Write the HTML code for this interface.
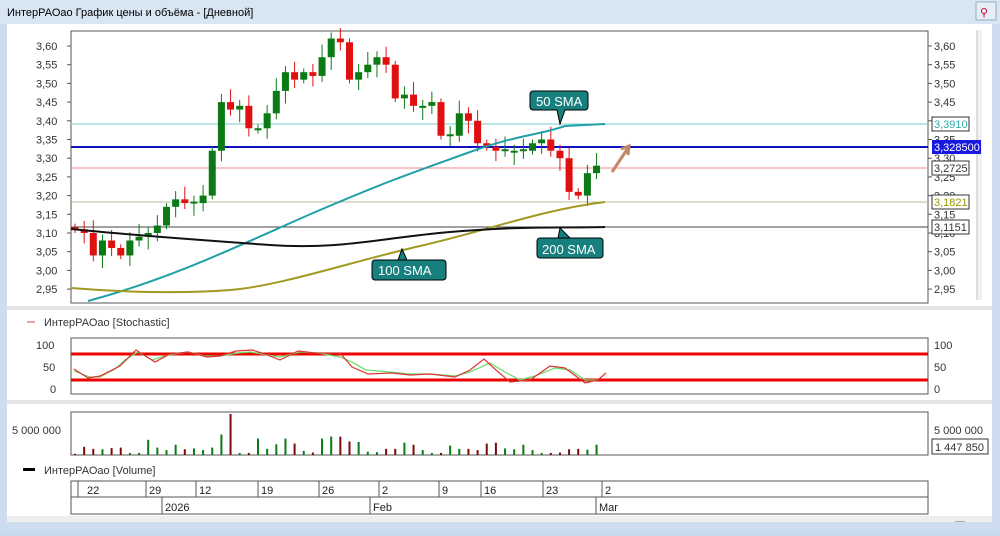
<!DOCTYPE html>
<html><head><meta charset="utf-8"><style>
body{margin:0;width:1000px;height:531px;overflow:hidden;background:#c9d9ec;font-family:"Liberation Sans",sans-serif}
svg text{font-family:"Liberation Sans",sans-serif}
</style></head><body>
<svg id="s" width="1000" height="531" xmlns="http://www.w3.org/2000/svg">
<rect x="0" y="0" width="1000" height="531" fill="#cddcee"/>
<rect x="0" y="0" width="1000" height="24" fill="#d8e5f3"/>
<text x="7" y="16" font-size="11" fill="#000">ИнтерРАОао График цены и объёма - [Дневной]</text>
<rect x="976" y="2" width="20" height="18" fill="#e8eef6" stroke="#9ab" />
<text x="980" y="16" font-size="11" fill="#c03">⚲</text>
<rect x="7" y="24" width="985" height="496" fill="#fff"/>
<rect x="7" y="306" width="985" height="4" fill="#e6e6e6"/>
<rect x="7" y="400" width="985" height="4" fill="#e6e6e6"/>
<rect x="7" y="516" width="985" height="6" fill="#eee"/>
<rect x="955" y="521" width="10" height="1" fill="#aaa"/>
<rect x="976" y="30" width="6" height="270" fill="#f0f0f0"/>
<rect x="976" y="30" width="2" height="270" fill="#ddd"/>
<!-- price plot -->
<rect x="71" y="31" width="857" height="272" fill="none" stroke="#555"/>
<g id="axes" font-size="11" fill="#333"></g>
<line x1="71" y1="124" x2="928" y2="124" stroke="#7cc" stroke-width="1"/>
<line x1="71" y1="147" x2="928" y2="147" stroke="#1010c0" stroke-width="2"/>
<line x1="71" y1="168" x2="928" y2="168" stroke="#e88" stroke-width="1"/>
<line x1="71" y1="202" x2="928" y2="202" stroke="#bb9" stroke-width="1"/>
<line x1="71" y1="227" x2="928" y2="227" stroke="#444" stroke-width="1"/>
<g id="candles"></g>
<path d="M88,301 C180,276 250,240 320,210 S420,170 470,152 S540,135 565,126 L605,124" fill="none" stroke="#20a0a8" stroke-width="2"/>
<path d="M71,288 C120,292 180,294 230,290 S350,262 420,246 S540,210 605,202" fill="none" stroke="#a09a20" stroke-width="2"/>
<path d="M71,229 C140,236 200,240 270,245 S380,238 450,232 S560,228 605,227" fill="none" stroke="#111" stroke-width="2"/>
<path d="M612,172 L628,148 M621,149 L629,146 L628,155" fill="none" stroke="#c08868" stroke-width="3"/>
<!-- callouts -->
<g font-size="13" fill="#fff">
<path d="M533,91 h52 a3,3 0 0 1 3,3 v13 a3,3 0 0 1 -3,3 h-20 l-5,14 l-3,-14 h-24 a3,3 0 0 1 -3,-3 v-13 a3,3 0 0 1 3,-3z" fill="#17807e" stroke="#000"/>
<text x="536" y="106">50 SMA</text>
<path d="M375,260 h68 a3,3 0 0 1 3,3 v14 a3,3 0 0 1 -3,3 h-68 a3,3 0 0 1 -3,-3 v-14 a3,3 0 0 1 3,-3 h23 l4,-11 l5,11z" fill="#17807e" stroke="#000"/>
<text x="378" y="275">100 SMA</text>
<path d="M540,238 h60 a3,3 0 0 1 3,3 v14 a3,3 0 0 1 -3,3 h-60 a3,3 0 0 1 -3,-3 v-14 a3,3 0 0 1 3,-3 h18 l2,-10 l10,10z" fill="#17807e" stroke="#000"/>
<text x="542" y="254">200 SMA</text>
</g>
<!-- right labels -->
<g font-size="11">
<rect x="932" y="117" width="37" height="14" fill="#fff" stroke="#333"/><text x="934" y="128" fill="#3aa">3,3910</text>
<rect x="932" y="140" width="49" height="14" fill="#1818e0"/><text x="934" y="151" fill="#fff">3,328500</text>
<rect x="932" y="161" width="37" height="14" fill="#fff" stroke="#333"/><text x="934" y="172" fill="#333">3,2725</text>
<rect x="932" y="195" width="37" height="14" fill="#fff" stroke="#333"/><text x="934" y="206" fill="#990">3,1821</text>
<rect x="932" y="220" width="37" height="14" fill="#fff" stroke="#333"/><text x="934" y="231" fill="#333">3,1151</text>
</g>
<!-- stochastic -->
<line x1="27" y1="322" x2="35" y2="322" stroke="#e44"/>
<text x="44" y="326" font-size="11" fill="#333">ИнтерРАОао [Stochastic]</text>
<rect x="71" y="338" width="857" height="56" fill="none" stroke="#555"/>
<g font-size="11" fill="#333">
<text x="36" y="349">100</text><text x="43" y="371">50</text><text x="50" y="393">0</text>
<text x="934" y="349">100</text><text x="934" y="371">50</text><text x="934" y="393">0</text>
</g>
<line x1="71" y1="354" x2="928" y2="354" stroke="#e00" stroke-width="3"/>
<line x1="71" y1="380" x2="928" y2="380" stroke="#e00" stroke-width="3"/>
<path d="M74,371 L90,377 L100,377 L115,369 L125,360 L138,352 L152,360 L168,355 L188,352 L205,356 L220,356 L238,353 L250,352 L262,354 L280,357 L300,352 L318,353 L340,357 L352,362 L366,370 L390,372 L410,374 L430,374 L455,376 L470,372 L490,363 L505,372 L520,380 L535,376 L555,368 L570,370 L585,380 L598,380" fill="none" stroke="#6d6" stroke-width="1.2"/>
<path d="M74,369 L88,378 L100,376 L120,366 L136,350 L155,362 L170,354 L188,352 L207,357 L220,356 L236,351 L252,350 L265,354 L280,360 L298,351 L315,353 L340,353 L352,367 L368,374 L392,373 L410,375 L430,374 L455,377 L470,370 L484,359 L496,370 L510,382 L530,380 L550,366 L565,368 L585,383 L598,380 L606,373" fill="none" stroke="#d33" stroke-width="1.2"/>
<!-- volume -->
<rect x="71" y="412" width="857" height="43" fill="none" stroke="#555"/>
<text x="12" y="434" font-size="11" fill="#333">5 000 000</text>
<text x="934" y="434" font-size="11" fill="#333">5 000 000</text>
<rect x="932" y="439" width="56" height="15" fill="#fff" stroke="#333"/><text x="935" y="451" font-size="11" fill="#333">1 447 850</text>
<g id="vol"></g>
<rect x="23" y="468" width="12" height="3" fill="#000"/>
<text x="44" y="474" font-size="11" fill="#333">ИнтерРАОао [Volume]</text>
<!-- dates -->
<g stroke="#555" fill="none">
<rect x="71" y="481" width="857" height="33"/>
<line x1="71" y1="497" x2="928" y2="497"/>
<line x1="78" y1="481" x2="78" y2="497"/><line x1="146" y1="481" x2="146" y2="497"/><line x1="196" y1="481" x2="196" y2="497"/><line x1="258" y1="481" x2="258" y2="497"/><line x1="319" y1="481" x2="319" y2="497"/><line x1="379" y1="481" x2="379" y2="497"/><line x1="439" y1="481" x2="439" y2="497"/><line x1="481" y1="481" x2="481" y2="497"/><line x1="543" y1="481" x2="543" y2="497"/><line x1="602" y1="481" x2="602" y2="497"/>
<line x1="162" y1="497" x2="162" y2="514"/><line x1="370" y1="497" x2="370" y2="514"/><line x1="596" y1="497" x2="596" y2="514"/>
</g>
<g font-size="11" fill="#222">
<text x="87" y="494">22</text><text x="149" y="494">29</text><text x="199" y="494">12</text><text x="261" y="494">19</text><text x="322" y="494">26</text><text x="382" y="494">2</text><text x="442" y="494">9</text><text x="484" y="494">16</text><text x="546" y="494">23</text><text x="605" y="494">2</text>
<text x="165" y="511">2026</text><text x="373" y="511">Feb</text><text x="599" y="511">Mar</text>
</g>
</svg>
<script>
var NS="http://www.w3.org/2000/svg";
function el(t,a,p){var e=document.createElementNS(NS,t);for(var k in a)e.setAttribute(k,a[k]);if(p)p.appendChild(e);return e;}
function Y(p){return 46+(3.60-p)/0.05*18.7;}
var ax=document.getElementById("axes");
for(var v=2.95;v<=3.601;v+=0.05){var y=Y(v);var s=v.toFixed(2).replace(".",",");
 var t=el("text",{x:36,y:y+4},ax);t.textContent=s;
 var t2=el("text",{x:934,y:y+4},ax);t2.textContent=s;
 el("line",{x1:67,y1:y,x2:71,y2:y,stroke:"#555"},ax);el("line",{x1:928,y1:y,x2:932,y2:y,stroke:"#555"},ax);}
var C=[3.11,3.10,3.04,3.08,3.06,3.04,3.08,3.09,3.10,3.12,3.17,3.19,3.18,3.18,3.20,3.32,3.45,3.43,3.44,3.38,3.38,3.42,3.48,3.53,3.51,3.53,3.52,3.57,3.62,3.61,3.51,3.53,3.55,3.57,3.55,3.46,3.47,3.44,3.44,3.45,3.36,3.36,3.42,3.40,3.34,3.33,3.32,3.32,3.32,3.32,3.34,3.35,3.32,3.30,3.21,3.20,3.26,3.28];
var g=document.getElementById("candles"),vg=document.getElementById("vol");
var V=[0.3,2,1.5,1.4,1.7,1.8,0.5,0.5,3.7,1.8,1.2,2.5,1.4,1.6,1.2,1.8,5,10,0.5,0.5,4,1.5,2.6,4,2.8,1,0.6,4,4.5,4.5,3.3,3.2,0.8,0.7,1.5,1.5,3,2.5,1.2,0.5,0.5,2.3,1.5,1.5,1.2,2.8,3,1.6,1.4,2.5,1.2,0.5,0.5,0.6,1.4,1.5,1.3,2.5,1.6,1,1.8];
for(var i=0;i<C.length;i++){
 var x=75+i*9.15,o=i?C[i-1]:3.115,c=C[i],up=c>=o;
 if(Math.abs(c-o)<0.004){c=o+(i%2?0.004:-0.004);}
 var col=up?"#0a7a14":"#e01010";
 var hi=Math.max(o,c)+0.01+((i*7)%5)*0.006,lo=Math.min(o,c)-0.01-((i*3)%5)*0.006;
 el("line",{x1:x,y1:Y(hi),x2:x,y2:Y(lo),stroke:col,"stroke-width":1},g);
 var y1=Y(Math.max(o,c)),y2=Y(Math.min(o,c));
 el("rect",{x:x-3.5,y:y1,width:7,height:Math.max(2,y2-y1),fill:col},g);
 var h=V[i]*4.1;el("rect",{x:x-1,y:455-h,width:2,height:h,fill:up?"#0a7a14":"#7a0a0a"},vg);
}
</script>
</body></html>
